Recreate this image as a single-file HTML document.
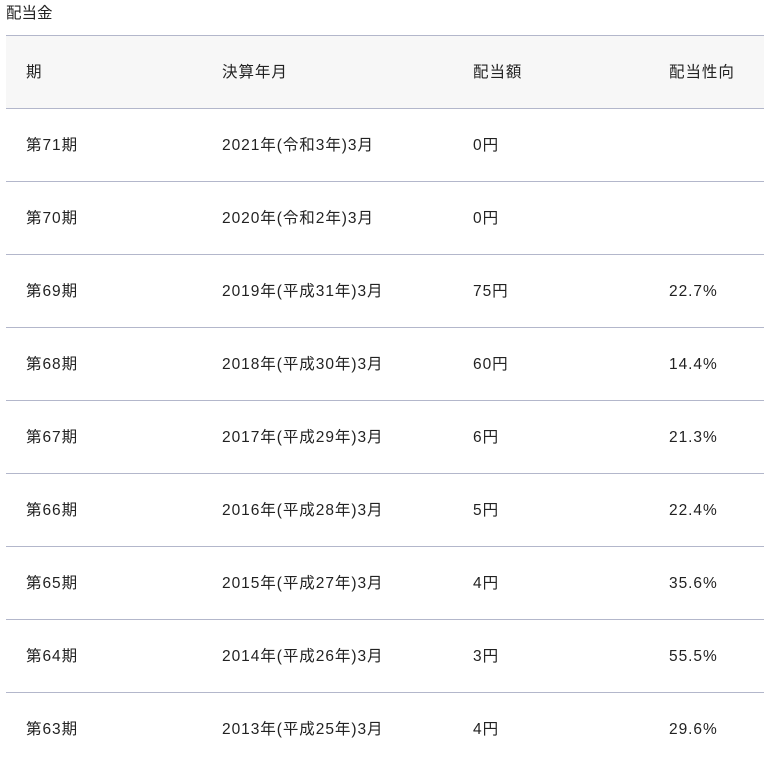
<!DOCTYPE html>
<html><head><meta charset="utf-8"><style>
body{margin:0;background:#fff;font-family:"Liberation Sans","Noto Sans CJK JP",sans-serif;font-size:15.5px;color:#222;width:764px;height:755px;overflow:hidden;letter-spacing:0.95px}
.t{position:absolute;left:6px;top:3px;line-height:22px;letter-spacing:0}
table{position:absolute;left:6px;top:35px;width:758px;border-collapse:collapse;table-layout:fixed}
td{height:72px;border-top:1px solid #b3b7cb;padding:2px 0 0 20px;box-sizing:border-box;vertical-align:middle;white-space:nowrap;line-height:20px}
tr{height:73px}
tr.h td{background:#f7f7f7}
</style></head><body>
<div class="t">配当金</div>
<table>
<colgroup><col style="width:196px"><col style="width:251px"><col style="width:196px"><col></colgroup>
<tr class="h"><td>期</td><td>決算年月</td><td>配当額</td><td>配当性向</td></tr>
<tr><td>第71期</td><td>2021年(令和3年)3月</td><td>0円</td><td></td></tr>
<tr><td>第70期</td><td>2020年(令和2年)3月</td><td>0円</td><td></td></tr>
<tr><td>第69期</td><td>2019年(平成31年)3月</td><td>75円</td><td>22.7%</td></tr>
<tr><td>第68期</td><td>2018年(平成30年)3月</td><td>60円</td><td>14.4%</td></tr>
<tr><td>第67期</td><td>2017年(平成29年)3月</td><td>6円</td><td>21.3%</td></tr>
<tr><td>第66期</td><td>2016年(平成28年)3月</td><td>5円</td><td>22.4%</td></tr>
<tr><td>第65期</td><td>2015年(平成27年)3月</td><td>4円</td><td>35.6%</td></tr>
<tr><td>第64期</td><td>2014年(平成26年)3月</td><td>3円</td><td>55.5%</td></tr>
<tr><td>第63期</td><td>2013年(平成25年)3月</td><td>4円</td><td>29.6%</td></tr>
</table>
</body></html>
